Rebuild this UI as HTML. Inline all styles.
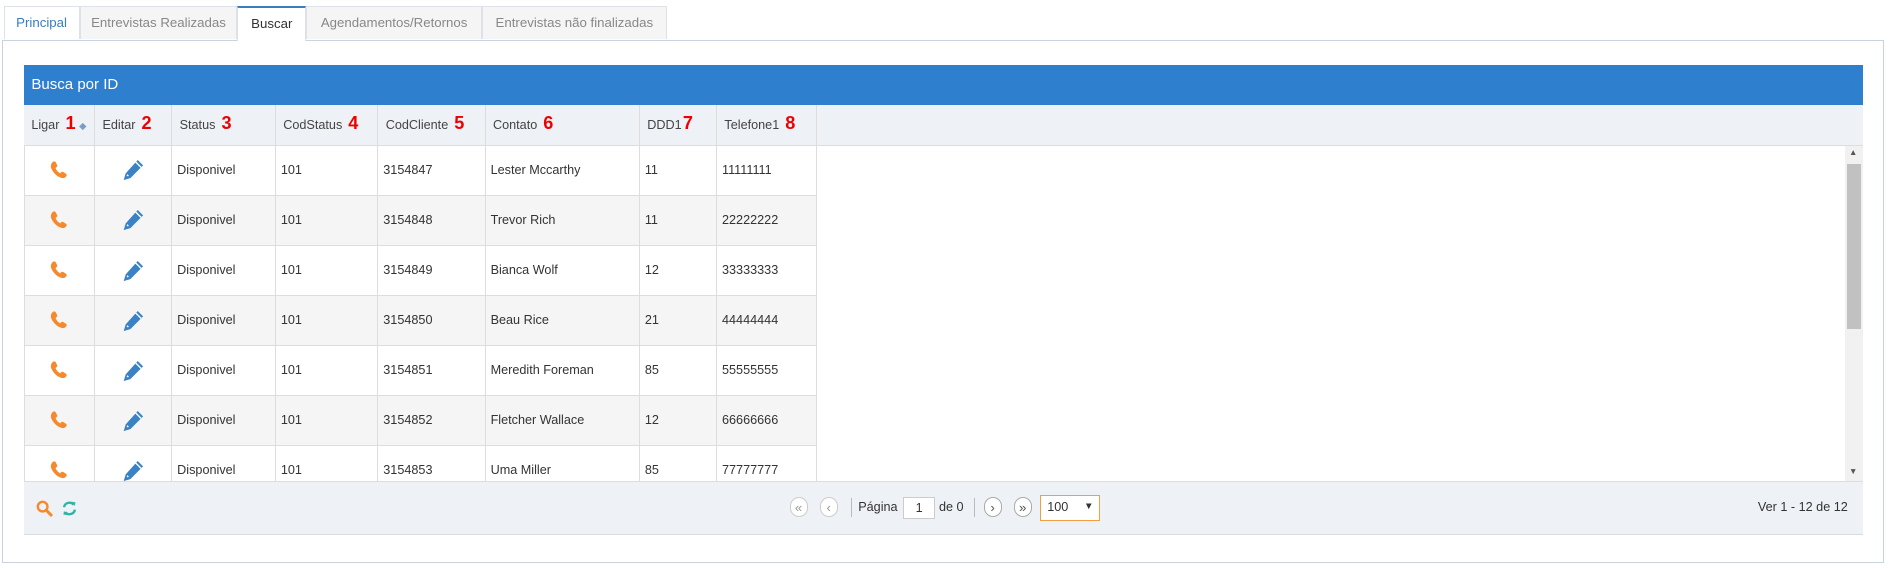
<!DOCTYPE html>
<html><head><meta charset="utf-8"><style>
html,body{margin:0;padding:0;background:#fff;}
body{width:1568px;height:471px;zoom:1.20536;overflow:hidden;position:relative;font-family:"Liberation Sans",sans-serif;font-size:10.5px;color:#333;}
.a{position:absolute;}
.tab{position:absolute;top:5px;height:27px;line-height:26px;border:1px solid #dde2e8;border-bottom:none;background:#f5f5f5;color:#888;font-size:11px;text-align:center;box-sizing:border-box;}
.hd{position:absolute;top:87px;height:34px;line-height:30px;font-size:10.5px;color:#444;box-sizing:border-box;padding-left:6px;border-right:1px solid #ddd;}
.n{color:#e00;font-weight:bold;font-size:15px;margin-left:5px;}
.cell{position:absolute;height:41.5px;line-height:41px;box-sizing:border-box;border-right:1px solid #ddd;border-bottom:1px solid #ddd;padding-left:4px;color:#333;font-size:10.5px;}
.pb{position:absolute;top:412px;width:15px;height:17px;border:1px solid #ccc;border-radius:9px;background:#fff;color:#999;text-align:center;line-height:16px;font-size:11px;box-sizing:border-box;}
</style></head><body>
<div class="a" style="left:2px;top:33px;width:1561px;height:434px;border:1px solid #c9d3df;box-sizing:border-box;"></div>
<div class="tab" style="left:3px;width:63px;background:#fff;color:#3a7dc0;">Principal</div>
<div class="tab" style="left:66px;width:131px;">Entrevistas Realizadas</div>
<div class="tab" style="left:197px;width:57px;background:#fff;color:#333;border-top:2px solid #3a7dc0;height:29px;">Buscar</div>
<div class="tab" style="left:254px;width:146px;">Agendamentos/Retornos</div>
<div class="tab" style="left:400px;width:153px;">Entrevistas não finalizadas</div>

<div class="a" style="left:20px;top:54px;width:1526px;height:33px;background:#2f7fcf;color:#fff;font-size:12.5px;line-height:33px;padding-left:6px;box-sizing:border-box;">Busca por ID</div>
<div class="a" style="left:20px;top:87px;width:1526px;height:34px;background:#eef1f5;border-bottom:1px solid #ddd;box-sizing:border-box;"></div>
<div class="hd" style="left:20px;width:59px;">Ligar<span class="n">1</span><span style="color:#7a9cc6;font-size:8px;margin-left:3px;">◆</span></div>
<div class="hd" style="left:79px;width:64px;">Editar<span class="n">2</span></div>
<div class="hd" style="left:143px;width:86px;">Status<span class="n">3</span></div>
<div class="hd" style="left:229px;width:85px;">CodStatus<span class="n">4</span></div>
<div class="hd" style="left:314px;width:89px;">CodCliente<span class="n">5</span></div>
<div class="hd" style="left:403px;width:128px;">Contato<span class="n">6</span></div>
<div class="hd" style="left:531px;width:64px;">DDD1<span class="n" style="margin-left:1px">7</span></div>
<div class="hd" style="left:595px;width:83px;">Telefone1<span class="n">8</span></div>

<div id="rows"></div>
<script>
var d=[["3154847","Lester Mccarthy","11","11111111"],["3154848","Trevor Rich","11","22222222"],["3154849","Bianca Wolf","12","33333333"],["3154850","Beau Rice","21","44444444"],["3154851","Meredith Foreman","85","55555555"],["3154852","Fletcher Wallace","12","66666666"],["3154853","Uma Miller","85","77777777"]];
var phone='<svg width="17" height="17" viewBox="0 0 16 16" style="vertical-align:middle"><path d="M3 1.5c1-.8 1.8-.5 2.3.4l1 2c.4.8.1 1.4-.6 1.9l-.6.4c.6 1.7 2 3.3 3.7 4.2l.5-.6c.6-.6 1.2-.8 2-.3l1.9 1.2c.8.5.9 1.3.1 2.2-1 1.2-2.3 1.6-3.8 1C5.8 12.6 2.9 9.4 1.7 6.3 1.1 4.6 1.7 2.6 3 1.5z" fill="#f7892d"/></svg>';
var pen='<svg width="20" height="20" viewBox="0 0 18 18" style="vertical-align:middle"><path d="M12.5 1.5l4 4L7 15l-5 1.5L3.5 11.5z" fill="#3b82c4"/><path d="M11 3l4 4" stroke="#fff" stroke-width="1"/><path d="M4.5 12.5l1 1" stroke="#fff" stroke-width="1"/></svg>';
var h='';var cols=[[20,59],[79,64],[143,86],[229,85],[314,89],[403,128],[531,64],[595,83]];
for(var i=0;i<7;i++){var t=121+i*41.5;var bg=i%2?'#f5f5f5':'#fff';
var v=[phone,pen,'Disponivel','101',d[i][0],d[i][1],d[i][2],d[i][3]];
for(var c=0;c<8;c++){var hh=(i==6)?(399-t):41.5;var st='left:'+cols[c][0]+'px;width:'+cols[c][1]+'px;top:'+t+'px;height:'+hh+'px;background:'+bg+';overflow:hidden;'+(c<2?'text-align:center;padding:0;':'')+(c==0?'border-left:1px solid #ddd;':'')+(i==6?'border-bottom:none;':'');
h+='<div class="cell" style="'+st+'">'+v[c]+'</div>';}}
document.getElementById('rows').innerHTML=h;
</script>
<div class="a" style="left:1531px;top:121px;width:15px;height:278px;background:#f1f1f1;"></div>
<div class="a" style="left:1532px;top:136px;width:12px;height:137px;background:#c1c1c1;"></div>
<div class="a" style="left:1534px;top:122px;font-size:7px;color:#555;">▲</div>
<div class="a" style="left:1534px;top:387px;font-size:7px;color:#555;">▼</div>

<div class="a" style="left:20px;top:399px;width:1526px;height:45px;background:#eef1f5;border-top:1px solid #ddd;border-bottom:1px solid #d8dde3;box-sizing:border-box;"></div>
<svg class="a" style="left:30px;top:415px" width="14" height="14" viewBox="0 0 14 14"><circle cx="5.5" cy="5.5" r="4" fill="none" stroke="#f7892d" stroke-width="2"/><path d="M8.5 8.5l4 4" stroke="#f7892d" stroke-width="2.5" stroke-linecap="round"/></svg>
<svg class="a" style="left:51px;top:415px" width="14" height="14" viewBox="0 0 14 14"><path d="M2.5 6a4.5 4.5 0 0 1 8-2" fill="none" stroke="#2bb5a8" stroke-width="2"/><path d="M11.5 8a4.5 4.5 0 0 1-8 2" fill="none" stroke="#2bb5a8" stroke-width="2"/><path d="M9 1.5l3 .5-.5 3z M5 12.5l-3-.5.5-3z" fill="#2bb5a8"/></svg>
<div class="pb" style="left:655px;">«</div>
<div class="pb" style="left:680px;">‹</div>
<div class="a" style="left:706px;top:413px;width:1px;height:16px;background:#bbb;"></div>
<div class="a" style="left:712px;top:415px;color:#333;">Página</div>
<div class="a" style="left:749px;top:412px;width:27px;height:19px;background:#fff;border:1px solid #ccc;box-sizing:border-box;text-align:center;line-height:17px;">1</div>
<div class="a" style="left:779px;top:415px;color:#333;">de 0</div>
<div class="a" style="left:808px;top:413px;width:1px;height:16px;background:#bbb;"></div>
<div class="pb" style="left:816px;color:#555;border-color:#aaa;">›</div>
<div class="pb" style="left:841px;color:#555;border-color:#aaa;">»</div>
<div class="a" style="left:863px;top:411px;width:50px;height:21px;background:#fff;border:1px solid #f0a040;box-sizing:border-box;line-height:19px;padding-left:5px;color:#333;">100<span style="position:absolute;right:5px;font-size:8px;">▼</span></div>
<div class="a" style="left:1440px;top:415px;width:93px;text-align:right;color:#333;">Ver 1 - 12 de 12</div>
</body></html>
